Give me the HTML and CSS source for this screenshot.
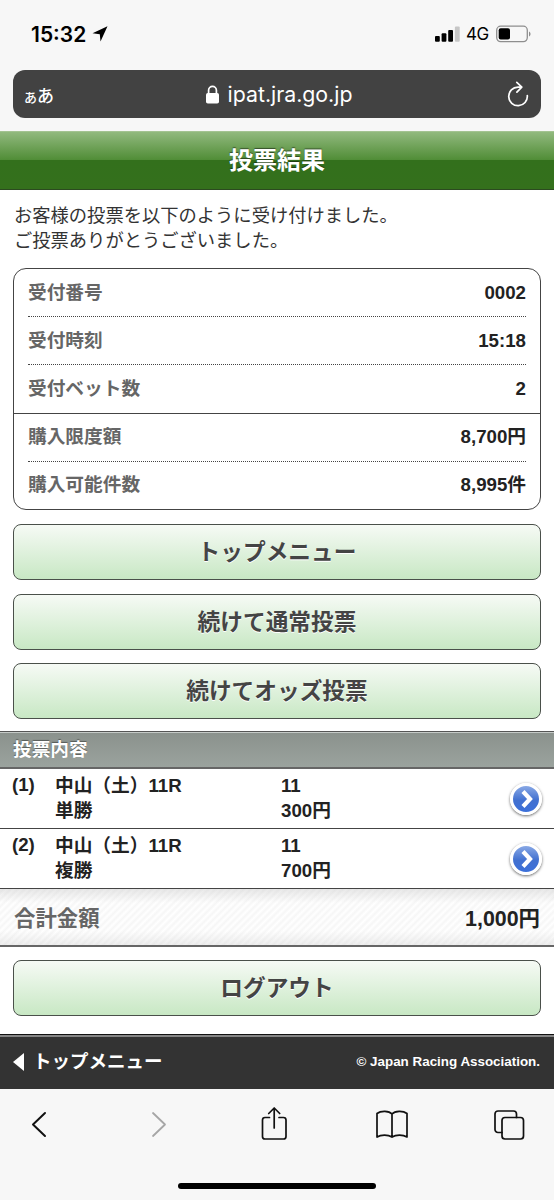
FILE: index.html
```html
<!DOCTYPE html>
<html lang="ja">
<head>
  <meta charset="UTF-8">
  <meta name="viewport" content="width=device-width, initial-scale=1.0">
  <title>投票結果</title>
  <link rel="stylesheet" href="styles.css">
</head>
<body>
  <div class="browser-top">
    <div class="status">
      <span class="time">15:32</span>
      <svg class="arrow" width="16" height="16" viewBox="0 0 16 16"><path d="M15.500 .3L.5 7.300l7.300 1 .7 7.200z"/></svg>
      <svg class="signal" width="25" height="16" viewBox="0 0 25 16">
        <rect x="0" y="10" width="4.8" height="5.8" rx="1"/>
        <rect x="6.600" y="7.200" width="4.800" height="8.600" rx="1"/>
        <rect x="13.200" y="4" width="4.800" height="11.800" rx="1"/>
        <rect x="19.900" y=".5" width="4.800" height="15.300" rx="1" fill="#c6c6c6"/>
      </svg>
      <span class="net">4G</span>
      <svg class="battery" width="36" height="18" viewBox="0 0 36 18">
        <rect x=".7" y="1.200" width="30.600" height="15.400" rx="4" fill="none" stroke="#8e8e8e" stroke-width="1.300"/>
        <rect x="2.700" y="3.200" width="11.300" height="11.400" rx="2"/>
        <path d="M33 6.500c2 .8 2 4.200 0 5z" fill="#8e8e8e"/>
      </svg>
    </div>
    <div class="address">
      <span class="aa"><small>あ</small>あ</span>
      <span class="url">
        <svg width="13" height="19" viewBox="0 0 13 19"><rect x="0" y="8" width="13" height="10.500" rx="1.800" fill="#fff"/><path d="M2.600 9V5.300a3.900 4 0 0 1 7.800 0V9" fill="none" stroke="#fff" stroke-width="1.700"/></svg>
        ipat.jra.go.jp
      </span>
      <svg class="reload" width="22" height="26" viewBox="0 0 22 26" fill="none" stroke="#fff" stroke-width="1.700" stroke-linecap="round" stroke-linejoin="round"><path d="M14.500 6.100H11A9.300 9.300 0 1 0 20.300 14.600M9.800 1.300l5 4.800-4.900 5.100"/></svg>
    </div>
  </div>

  <h1 class="title">投票結果</h1>

  <div class="content">
    <p class="message">お客様の投票を以下のように受け付けました。<br>ご投票ありがとうございました。</p>

    <div class="info">
      <dl class="group">
        <div class="row"><dt>受付番号</dt><dd>0002</dd></div>
        <div class="row"><dt>受付時刻</dt><dd>15:18</dd></div>
        <div class="row"><dt>受付ベット数</dt><dd>2</dd></div>
      </dl>
      <dl class="group">
        <div class="row"><dt>購入限度額</dt><dd>8,700円</dd></div>
        <div class="row"><dt>購入可能件数</dt><dd>8,995件</dd></div>
      </dl>
    </div>

    <a class="btn">トップメニュー</a>
    <a class="btn">続けて通常投票</a>
    <a class="btn">続けてオッズ投票</a>
  </div>

  <h2 class="heading">投票内容</h2>
  <div class="bet">
    <span class="no">(1)</span>
    <span class="race">中山（土）11R<br>単勝</span>
    <span class="amount">11<br>300円</span>
    <span class="more"><svg width="12" height="18" viewBox="0 0 12 18"><path d="M2 1.500l7 7.500-7 7.500" fill="none" stroke="#fff" stroke-width="4.200"/></svg></span>
  </div>
  <div class="bet">
    <span class="no">(2)</span>
    <span class="race">中山（土）11R<br>複勝</span>
    <span class="amount">11<br>700円</span>
    <span class="more"><svg width="12" height="18" viewBox="0 0 12 18"><path d="M2 1.500l7 7.500-7 7.500" fill="none" stroke="#fff" stroke-width="4.200"/></svg></span>
  </div>
  <div class="total"><span class="label">合計金額</span><span>1,000円</span></div>

  <div class="logout"><a class="btn">ログアウト</a></div>

  <footer class="footer">
    <a class="back"><svg width="11" height="18" viewBox="0 0 11 18"><path d="M11 0v18L0 9z" fill="#fff"/></svg><span>トップメニュー</span></a>
    <span class="copy">© Japan Racing Association.</span>
  </footer>

  <div class="browser-bottom">
    <div class="tools">
      <svg width="34" height="36" viewBox="0 0 34 36"><path d="M23 7L11 18.500 23 30" stroke-width="2"/></svg>
      <svg width="34" height="36" viewBox="0 0 34 36"><path d="M13 7l12 11.500L13 30" stroke="#a6a6a6" stroke-width="1.800"/></svg>
      <svg width="34" height="36" viewBox="0 0 34 36"><path d="M12.500 11.500H8a2.500 2.500 0 0 0-2.500 2.500v16.500A2.500 2.500 0 0 0 8 33h18.500a2.500 2.500 0 0 0 2.500-2.500V14a2.500 2.500 0 0 0-2.500-2.500H22M17.200 22V2.500M11.700 7.500l5.500-5.500 5.500 5.500"/></svg>
      <svg width="34" height="36" viewBox="0 0 34 36"><path d="M17 8v23C13 28.500 6 28.500 2 31V7.500C6 4.500 14 4.700 17 8zC20 4.700 28 4.500 32 7.500V31c-4-2.500-11-2.500-15 0"/></svg>
      <svg width="34" height="36" viewBox="0 0 34 36"><rect x="10" y="11.500" width="21.500" height="21.500" rx="3"/><path d="M10 26.500H6A3 3 0 0 1 3 23.500V8a3 3 0 0 1 3-3h15.500a3 3 0 0 1 3 3v3.500"/></svg>
    </div>
    <div class="home"></div>
  </div>
</body>
</html>
```
FILE: styles.css
```css
* {
  box-sizing: border-box;
}
body {
  margin: 0;
  font-family: "Liberation Sans", "Noto Sans CJK JP", sans-serif;
  font-size: 18.7px;
  color: #222;
  background: #fff;
}
h1, h2, p, dl, dd {
  margin: 0;
}
svg {
  display: block;
  flex: none;
}

/* browser */
.browser-top {
  height: 131px;
  padding: 22px 13px 0;
  background: #f7f7f7;
  font-family: Inter, "Noto Sans CJK JP", sans-serif;
}
.status {
  display: flex;
  align-items: center;
  height: 24px;
  padding: 0 9px 0 18px;
  color: #000;
}
.time {
  width: 57px;
  font-size: 21px;
  font-weight: 600;
}
.arrow {
  margin-left: 4px;
}
.signal {
  margin-left: auto;
}
.net {
  margin: 0 7px 0 6px;
  font-size: 17px;
  letter-spacing: -0.3px;
}
.address {
  display: flex;
  align-items: center;
  justify-content: space-between;
  height: 48px;
  margin-top: 24px;
  padding: 0 12px 0 11px;
  border-radius: 12px;
  background: #424242;
  color: #fff;
}
.aa {
  width: 27px;
  font-family: "Noto Sans CJK JP", sans-serif;
  font-size: 17px;
  font-weight: 500;
  white-space: nowrap;
}
.aa small {
  font-size: 13px;
}
.url {
  display: flex;
  align-items: center;
  gap: 9px;
  font-size: 21.3px;
}

/* page */
.title {
  height: 59px;
  border-top: 1px solid #a3c391;
  border-bottom: 1px solid #2c4a20;
  background: linear-gradient(#91b97e, #4f8c35 50%, #33701c 50%, #34701c);
  color: #fff;
  font-size: 24px;
  line-height: 57px;
  text-align: center;
  text-shadow: 0 -1px 1px rgba(0, 0, 0, 0.5);
}
.content {
  padding: 13px 13px 11.8px;
}
.message {
  padding-left: 1px;
  font-size: 18.3px;
  line-height: 25px;
  color: #333;
}
.info {
  margin: 15px 0 14px;
  border: 1px solid #444;
  border-radius: 13px;
  font-weight: bold;
}
.group {
  padding: 0 14px;
}
.group + .group {
  border-top: 1px solid #444;
}
.row {
  display: flex;
  justify-content: space-between;
  height: 48px;
  border-bottom: 1px dotted #444;
  line-height: 47px;
}
.row:last-child {
  border-bottom: 0;
}
.group + .group .row {
  line-height: 46px;
}
.group + .group .row:last-child {
  height: 47px;
}
.row dt {
  color: #666;
}
.btn {
  display: block;
  height: 56px;
  border: 1px solid #4a504a;
  border-radius: 8px;
  background: linear-gradient(#f6faf5, #c8e8c4);
  color: #444;
  font-size: 22.7px;
  font-weight: bold;
  line-height: 54px;
  text-align: center;
  text-shadow: 0 1px 0 #fff;
}
.btn + .btn {
  margin-top: 13.6px;
}
.heading {
  height: 38px;
  padding-left: 13px;
  border-top: 1px solid #555;
  border-bottom: 2px solid #666;
  background: linear-gradient(#8a918c, #9ba39e);
  box-shadow: inset 0 1px 0 #c5cac7;
  color: #fff;
  font-size: 18.7px;
  line-height: 36px;
  text-shadow: 0 -1px 1px rgba(0, 0, 0, 0.4);
}
.bet {
  display: grid;
  grid-template-columns: 43px 226px 1fr auto;
  height: 60px;
  padding: 4px 12px 0;
  border-bottom: 1px solid #444;
  font-weight: bold;
  line-height: 25px;
}
.no {
  margin-top: -1px;
}
.more {
  display: flex;
  align-items: center;
  justify-content: center;
  width: 32px;
  height: 32px;
  margin-top: 10px;
  padding-left: 1px;
  border: 3px solid #fff;
  border-radius: 50%;
  background: linear-gradient(#88a8e5, #4170d0 55%, #3c70da);
  box-shadow: 0 1px 3px rgba(0, 0, 0, 0.6);
}
.total {
  display: flex;
  justify-content: space-between;
  height: 58px;
  padding: 0 14px;
  border-bottom: 2px solid #666;
  background: linear-gradient(rgba(190, 190, 190, 0.35), transparent 25%, transparent 75%, rgba(190, 190, 190, 0.25)), repeating-linear-gradient(135deg, #fff 0, #f6f6f6 2.5px, #fff 5px);
  font-size: 21.4px;
  font-weight: bold;
  line-height: 60px;
}
.total .label {
  color: #666;
}
.logout {
  padding: 13px 13px 18px;
}
.footer {
  display: flex;
  align-items: center;
  justify-content: space-between;
  height: 55px;
  padding: 0 14px 0 13px;
  border-top: 1px solid #111;
  background: #333;
  box-shadow: inset 0 2px 0 #858585;
  color: #fff;
  font-weight: bold;
}
.back {
  display: flex;
  align-items: center;
  gap: 9px;
  font-size: 18.5px;
}
.back span {
  padding-bottom: 4px;
}
.copy {
  font-size: 13.4px;
}
.browser-bottom {
  height: 111px;
  padding: 17px 0 0;
  background: #f7f7f7;
}
.tools {
  display: flex;
  justify-content: space-between;
  padding: 0 28px 0 22px;
}
.tools svg {
  fill: none;
  stroke: #111;
  stroke-width: 1.7;
  stroke-linecap: round;
  stroke-linejoin: round;
}
.home {
  width: 198px;
  height: 6px;
  margin: 41px auto 0;
  border-radius: 3px;
  background: #000;
}
```
